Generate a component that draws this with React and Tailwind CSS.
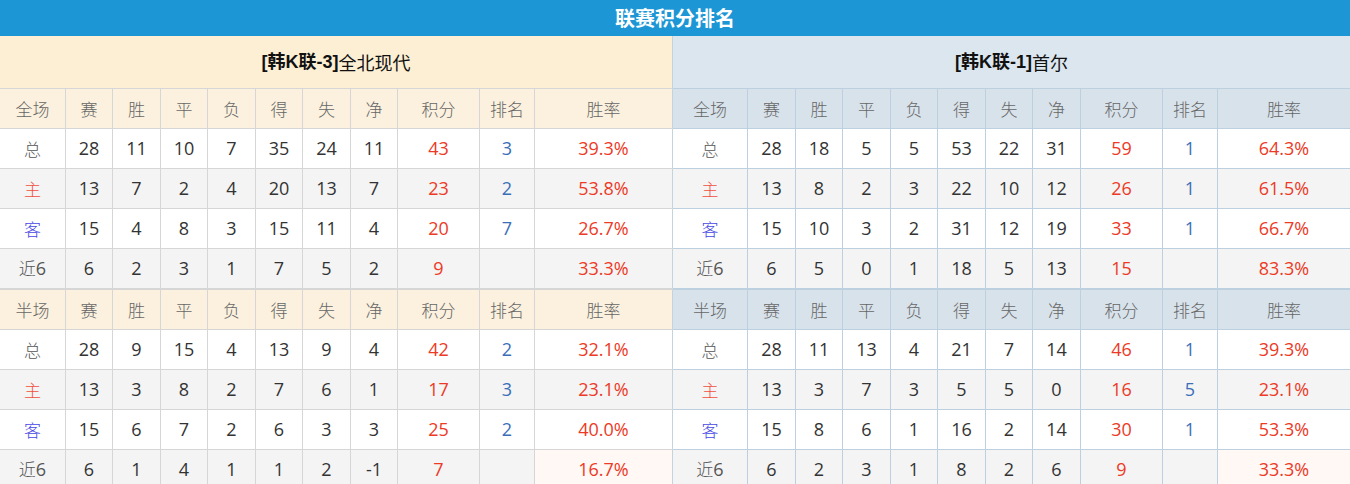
import React from 'react';

const cjk = "font-['Noto_Sans_CJK_SC',sans-serif]";
const num = "font-['Open_Sans','Noto_Sans_CJK_SC',sans-serif]";

const headers = ['赛', '胜', '平', '负', '得', '失', '净', '积分', '排名', '胜率'];

const leftWidths = ['w-[66px]', 'w-[47px]', 'w-[48px]', 'w-[47px]', 'w-[48px]', 'w-[47px]', 'w-[48px]', 'w-[47px]', 'w-[82px]', 'w-[55px]', 'w-[138px]'];
const rightWidths = ['w-[75px]', 'w-[48px]', 'w-[47px]', 'w-[48px]', 'w-[47px]', 'w-[48px]', 'w-[47px]', 'w-[48px]', 'w-[82px]', 'w-[55px]', 'w-[132px]'];

const home = {
  name: '全北现代',
  tag: '[韩K联-3]',
  full: [
    ['总', 28, 11, 10, 7, 35, 24, 11, 43, 3, '39.3%'],
    ['主', 13, 7, 2, 4, 20, 13, 7, 23, 2, '53.8%'],
    ['客', 15, 4, 8, 3, 15, 11, 4, 20, 7, '26.7%'],
    ['近6', 6, 2, 3, 1, 7, 5, 2, 9, '', '33.3%'],
  ],
  half: [
    ['总', 28, 9, 15, 4, 13, 9, 4, 42, 2, '32.1%'],
    ['主', 13, 3, 8, 2, 7, 6, 1, 17, 3, '23.1%'],
    ['客', 15, 6, 7, 2, 6, 3, 3, 25, 2, '40.0%'],
    ['近6', 6, 1, 4, 1, 1, 2, -1, 7, '', '16.7%'],
  ],
};

const away = {
  name: '首尔',
  tag: '[韩K联-1]',
  full: [
    ['总', 28, 18, 5, 5, 53, 22, 31, 59, 1, '64.3%'],
    ['主', 13, 8, 2, 3, 22, 10, 12, 26, 1, '61.5%'],
    ['客', 15, 10, 3, 2, 31, 12, 19, 33, 1, '66.7%'],
    ['近6', 6, 5, 0, 1, 18, 5, 13, 15, '', '83.3%'],
  ],
  half: [
    ['总', 28, 11, 13, 4, 21, 7, 14, 46, 1, '39.3%'],
    ['主', 13, 3, 7, 3, 5, 5, 0, 16, 5, '23.1%'],
    ['客', 15, 8, 6, 1, 16, 2, 14, 30, 1, '53.3%'],
    ['近6', 6, 2, 3, 1, 8, 2, 6, 9, '', '33.3%'],
  ],
};

const labelColor = (label) => {
  if (label === '主') return 'text-[#f0503f]';
  if (label === '客') return 'text-[#4646e4]';
  return 'text-[#555]';
};

const cellColor = (i) => {
  if (i === 8 || i === 10) return 'text-[#ec3a26]';
  if (i === 9) return 'text-[#3a6fb8]';
  return 'text-[#333]';
};

function HeaderRow({ first, widths, theme, top }) {
  return (
    <div className={`flex ${theme.head} border-b ${theme.border} ${top ? `h-[41px] border-t ${theme.thick}` : 'h-[40px]'}`}>
      {[first, ...headers].map((h, i) => (
        <div
          key={i}
          className={`${widths[i]} shrink-0 flex items-center justify-center ${cjk} font-light text-[17px] text-[#666] ${i < 10 ? `border-r ${theme.border}` : theme.last}`}
        >
          {h}
        </div>
      ))}
    </div>
  );
}

function DataRow({ row, widths, theme, odd, last }) {
  return (
    <div className={`flex h-[40px] border-b ${theme.border} ${odd ? 'bg-[#f4f4f4]' : 'bg-white'}`}>
      {row.map((v, i) => (
        <div
          key={i}
          className={`${widths[i]} shrink-0 flex items-center justify-center ${i === 0 ? `${cjk} font-light text-[17px] ${labelColor(v)}` : `${num} text-[18px] ${cellColor(i)}`} ${i < 10 ? `border-r ${theme.border}` : theme.last} ${last && i === 10 ? 'bg-[#fff8f5]' : ''}`}
        >
          {i === 0 && v === '近6' ? (
            <span>
              近<span className={`${num} font-normal text-[18px]`}>6</span>
            </span>
          ) : (
            v
          )}
        </div>
      ))}
    </div>
  );
}

function TeamTable({ team, widths, theme, className }) {
  return (
    <div className={className}>
      <div className={`h-[53px] flex items-center justify-center border-b ${theme.border} ${theme.team} ${theme.last} text-[18px] text-[#111]`}>
        <span className="font-['Liberation_Sans','Noto_Sans_CJK_SC',sans-serif] font-bold">{team.tag}</span>
        <span className={cjk}>{team.name}</span>
      </div>
      <HeaderRow first="全场" widths={widths} theme={theme} />
      {team.full.map((r, i) => (
        <DataRow key={i} row={r} widths={widths} theme={theme} odd={i % 2 === 1} />
      ))}
      <HeaderRow first="半场" widths={widths} theme={theme} top />
      {team.half.map((r, i) => (
        <DataRow key={i} row={r} widths={widths} theme={theme} odd={i % 2 === 1} last={i === 3} />
      ))}
    </div>
  );
}

const leftTheme = {
  team: 'bg-[#fcefd3]',
  head: 'bg-[#fbf1de]',
  border: 'border-[#d6d6d6]',
  thick: 'border-[#d0d0d0]',
  last: 'border-r border-r-[#c4d3e0]',
};

const rightTheme = {
  team: 'bg-[#dce6ee]',
  head: 'bg-[#d8e2eb]',
  border: 'border-[#bcd0e0]',
  thick: 'border-[#b6cadb]',
  last: '',
};

export default function App() {
  return (
    <div className="w-[1350px] h-[484px] overflow-hidden bg-white">
      <div className="h-[36px] bg-[#1c96d5] flex items-center justify-center text-white text-[20px] font-bold font-['Noto_Sans_CJK_SC',sans-serif]">
        联赛积分排名
      </div>
      <div className="flex">
        <TeamTable team={home} widths={leftWidths} theme={leftTheme} className="w-[673px] shrink-0" />
        <TeamTable team={away} widths={rightWidths} theme={rightTheme} className="w-[677px] shrink-0" />
      </div>
    </div>
  );
}
